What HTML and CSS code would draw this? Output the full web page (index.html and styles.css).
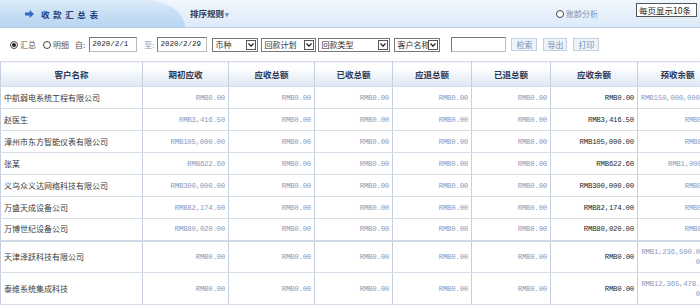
FILE: index.html
```html
<!DOCTYPE html>
<html lang="zh-CN">
<head>
    <meta charset="UTF-8">
    <title>收款汇总表</title>
    <link rel="stylesheet" href="styles.css">
</head>
<body>
    <div class="topbar">
        <div class="tab">
            <svg class="arrow-icon" width="9" height="8" viewBox="0 0 9 8"><path d="M0 2.6h4.6V0L9 4 4.6 8V5.4H0z" fill="#2f6cc8"/></svg>
            <span class="title">收款汇总表</span>
        </div>
        <div class="sort">排序规则<span class="caret">▾</span></div>
        <div class="aging"><span class="radio"></span>账龄分析</div>
        <div class="perpage">每页显示10条</div>
    </div>

    <div class="filters">
        <span class="radio checked"></span><span class="opt">汇总</span>
        <span class="radio r2"></span><span class="opt">明细</span>
        <span class="lbl l1">自:</span>
        <div class="field f-date">2020/2/1</div>
        <span class="lbl l2">至:</span>
        <div class="field f-date2">2020/2/29</div>
        <div class="sel s1"><span class="sel-text">币种</span><span class="sel-arrow"><svg width="6" height="4" viewBox="0 0 6 4"><path d="M0.5 0.5L3 3.2 5.5 0.5" fill="none" stroke="#222" stroke-width="1.2"/></svg></span></div>
        <div class="sel s2"><span class="sel-text">回款计划</span><span class="sel-arrow"><svg width="6" height="4" viewBox="0 0 6 4"><path d="M0.5 0.5L3 3.2 5.5 0.5" fill="none" stroke="#222" stroke-width="1.2"/></svg></span></div>
        <div class="sel s3"><span class="sel-text">回款类型</span><span class="sel-arrow"><svg width="6" height="4" viewBox="0 0 6 4"><path d="M0.5 0.5L3 3.2 5.5 0.5" fill="none" stroke="#222" stroke-width="1.2"/></svg></span></div>
        <div class="sel s4"><span class="sel-text">客户名称</span><span class="sel-arrow"><svg width="6" height="4" viewBox="0 0 6 4"><path d="M0.5 0.5L3 3.2 5.5 0.5" fill="none" stroke="#222" stroke-width="1.2"/></svg></span></div>
        <div class="field f-text"></div>
        <button class="btn b1">检索</button>
        <button class="btn b2">导出</button>
        <button class="btn b3">打印</button>
    </div>

    <table class="report">
        <colgroup>
            <col class="c-name">
            <col class="c-86">
            <col class="c-86">
            <col class="c-78">
            <col class="c-79">
            <col class="c-79">
            <col class="c-87">
            <col class="c-last">
        </colgroup>
        <thead>
            <tr>
                <th>客户名称</th>
                <th>期初应收</th>
                <th>应收总额</th>
                <th>已收总额</th>
                <th>应退总额</th>
                <th>已退总额</th>
                <th>应收余额</th>
                <th>预收余额</th>
            </tr>
        </thead>
        <tbody>
            <tr>
                <td class="name">中航弱电系统工程有限公司</td>
                <td class="num">RMB0.00</td><td class="num">RMB0.00</td><td class="num">RMB0.00</td>
                <td class="num">RMB0.00</td><td class="num">RMB0.00</td>
                <td class="num due">RMB0.00</td><td class="num left">RMB150,000,000.00</td>
            </tr>
            <tr>
                <td class="name">赵医生</td>
                <td class="num">RMB3,416.50</td><td class="num">RMB0.00</td><td class="num">RMB0.00</td>
                <td class="num">RMB0.00</td><td class="num">RMB0.00</td>
                <td class="num due">RMB3,416.50</td><td class="num">RMB0.00</td>
            </tr>
            <tr>
                <td class="name">漳州市东方智能仪表有限公司</td>
                <td class="num">RMB105,000.00</td><td class="num">RMB0.00</td><td class="num">RMB0.00</td>
                <td class="num">RMB0.00</td><td class="num">RMB0.00</td>
                <td class="num due">RMB105,000.00</td><td class="num">RMB0.00</td>
            </tr>
            <tr>
                <td class="name">张某</td>
                <td class="num">RMB622.60</td><td class="num">RMB0.00</td><td class="num">RMB0.00</td>
                <td class="num">RMB0.00</td><td class="num">RMB0.00</td>
                <td class="num due">RMB622.60</td><td class="num">RMB1,000.00</td>
            </tr>
            <tr>
                <td class="name">义乌众义达网络科技有限公司</td>
                <td class="num">RMB300,000.00</td><td class="num">RMB0.00</td><td class="num">RMB0.00</td>
                <td class="num">RMB0.00</td><td class="num">RMB0.00</td>
                <td class="num due">RMB300,000.00</td><td class="num">RMB0.00</td>
            </tr>
            <tr>
                <td class="name">万盛天成设备公司</td>
                <td class="num">RMB82,174.00</td><td class="num">RMB0.00</td><td class="num">RMB0.00</td>
                <td class="num">RMB0.00</td><td class="num">RMB0.00</td>
                <td class="num due">RMB82,174.00</td><td class="num">RMB0.00</td>
            </tr>
            <tr class="split">
                <td class="name">万博世纪设备公司</td>
                <td class="num">RMB80,020.00</td><td class="num">RMB0.00</td><td class="num">RMB0.00</td>
                <td class="num">RMB0.00</td><td class="num">RMB0.00</td>
                <td class="num due">RMB80,020.00</td><td class="num">RMB0.00</td>
            </tr>
            <tr class="tall">
                <td class="name">天津泽跃科技有限公司</td>
                <td class="num">RMB0.00</td><td class="num">RMB0.00</td><td class="num">RMB0.00</td>
                <td class="num">RMB0.00</td><td class="num">RMB0.00</td>
                <td class="num due">RMB0.00</td><td class="num wrap">RMB1,236,500.0<br>0</td>
            </tr>
            <tr class="tall">
                <td class="name">泰维系统集成科技</td>
                <td class="num">RMB0.00</td><td class="num">RMB0.00</td><td class="num">RMB0.00</td>
                <td class="num">RMB0.00</td><td class="num">RMB0.00</td>
                <td class="num due">RMB0.00</td><td class="num wrap">RMB12,365,478.<br>0</td>
            </tr>
        </tbody>
    </table>
</body>
</html>
```

FILE: styles.css
```css
* {
    box-sizing: border-box;
}

body {
    margin: 0;
    width: 700px;
    overflow: hidden;
    font-family: "Noto Sans CJK SC", sans-serif;
    font-size: 8px;
    line-height: 10px;
    color: #333;
    background: #fff;
}

/* top bar */
.topbar {
    display: flex;
    align-items: center;
    height: 28px;
    background: linear-gradient(#f1f7fd, #dceaf8);
    border-bottom: 1px solid #b6d0ea;
}

.tab {
    display: flex;
    align-items: center;
    width: 185px;
    height: 27px;
    padding-left: 25px;
    background: linear-gradient(#dcebf9 0%, #c6ddf4 55%, #b9d5f1 100%);
    border-top-right-radius: 40px 27px;
}

.arrow-icon {
    display: block;
}

.title {
    margin-left: 7px;
    font-size: 8.5px;
    font-weight: bold;
    letter-spacing: 3.6px;
    color: #1f3d72;
}

.sort {
    margin-left: 5px;
    font-size: 8.5px;
    font-weight: bold;
    color: #2b3a5a;
}

.caret {
    margin-left: 1px;
    color: #5b86c0;
    font-size: 7px;
}

.aging {
    display: flex;
    align-items: center;
    gap: 2px;
    margin-left: auto;
    color: #7f8fae;
}

.perpage {
    align-self: flex-start;
    margin: 3px 3px 0 38px;
    width: 61px;
    height: 14px;
    padding-left: 2px;
    border: 1px solid #555;
    background: #fff;
    font-size: 8.5px;
    line-height: 12px;
    color: #222;
}

/* radios */
.radio {
    display: inline-grid;
    place-items: center;
    width: 8px;
    height: 8px;
    border: 1px solid #444;
    border-radius: 50%;
    background: #fff;
}

.radio.checked::after {
    content: "";
    width: 4px;
    height: 4px;
    border-radius: 50%;
    background: #222;
}

/* filter row */
.filters {
    display: flex;
    align-items: center;
    height: 33px;
    padding-left: 10px;
}

.opt {
    margin-left: 2px;
    color: #555;
}

.r2 {
    margin-left: 7px;
}

.lbl {
    color: #555;
}

.l1 {
    margin-left: 6px;
}

.l2 {
    margin-left: 7px;
    color: #7f8fae;
}

.field {
    height: 15px;
    border: 1px solid #8a8a8a;
    border-color: #777 #bbb #bbb #777;
    background: #fff;
    padding-left: 2px;
    font-family: "Liberation Mono", monospace;
    font-size: 7.5px;
    line-height: 13px;
    color: #222;
}

.f-date {
    width: 48px;
    margin-left: 4px;
}

.f-date2 {
    width: 50px;
    margin-left: 3px;
}

.f-text {
    width: 55px;
    margin-left: 11px;
}

.sel {
    display: flex;
    align-items: center;
    height: 14px;
    border: 1px solid #777;
    background: #fff;
    color: #333;
}

.sel-text {
    flex: 1;
    padding-left: 2px;
    white-space: nowrap;
    overflow: hidden;
}

.sel-arrow {
    display: grid;
    place-items: center;
    width: 10px;
    height: 10px;
    margin-right: 1px;
    border: 1px solid #555;
    background: #fff;
}

.sel-arrow svg {
    display: block;
}

.s1 { width: 46px; margin-left: 5px; }
.s2 { width: 55px; margin-left: 3px; }
.s3 { width: 72px; margin-left: 2px; }
.s4 { width: 46px; margin-left: 4px; }

.btn {
    height: 13px;
    padding: 0;
    border: 1px solid #c3d0e0;
    background: #eef3f9;
    font-family: inherit;
    font-size: 8px;
    line-height: 11px;
    color: #6f8db5;
}

.b1 { width: 26px; margin-left: 5px; }
.b2 { width: 24px; margin-left: 6px; }
.b3 { width: 26px; margin-left: 6px; }

/* report table */
.report {
    width: 717px;
    border-collapse: collapse;
    table-layout: fixed;
}

.c-name { width: 142px; }
.c-86 { width: 86px; }
.c-78 { width: 78px; }
.c-79 { width: 79px; }
.c-87 { width: 87px; }
.c-last { width: 80px; }

.report th,
.report td {
    border: 1px solid #d6dde9;
    border-left-color: #c6cfdf;
    border-right-color: #c6cfdf;
}

.report th {
    height: 25px;
    padding: 0;
    background: linear-gradient(#ffffff 20%, #dce7f4);
    font-size: 8.5px;
    font-weight: bold;
    color: #2f3650;
}

.report td {
    height: 22px;
    padding: 0 3px;
    white-space: nowrap;
}

.name {
    color: #3a3a3a;
}

.num {
    text-align: right;
    font-family: "Liberation Mono", monospace;
    font-size: 7.4px;
    letter-spacing: -0.25px;
    color: #8b9bbd;
}

.num.due {
    color: #2a2a2a;
}

.num.left {
    text-align: left;
}

.report td.wrap {
    padding-right: 17px;
    line-height: 10px;
}

.split td {
    border-bottom: 2px solid #d0d8e6;
}

.tall td {
    height: 32px;
}
```
